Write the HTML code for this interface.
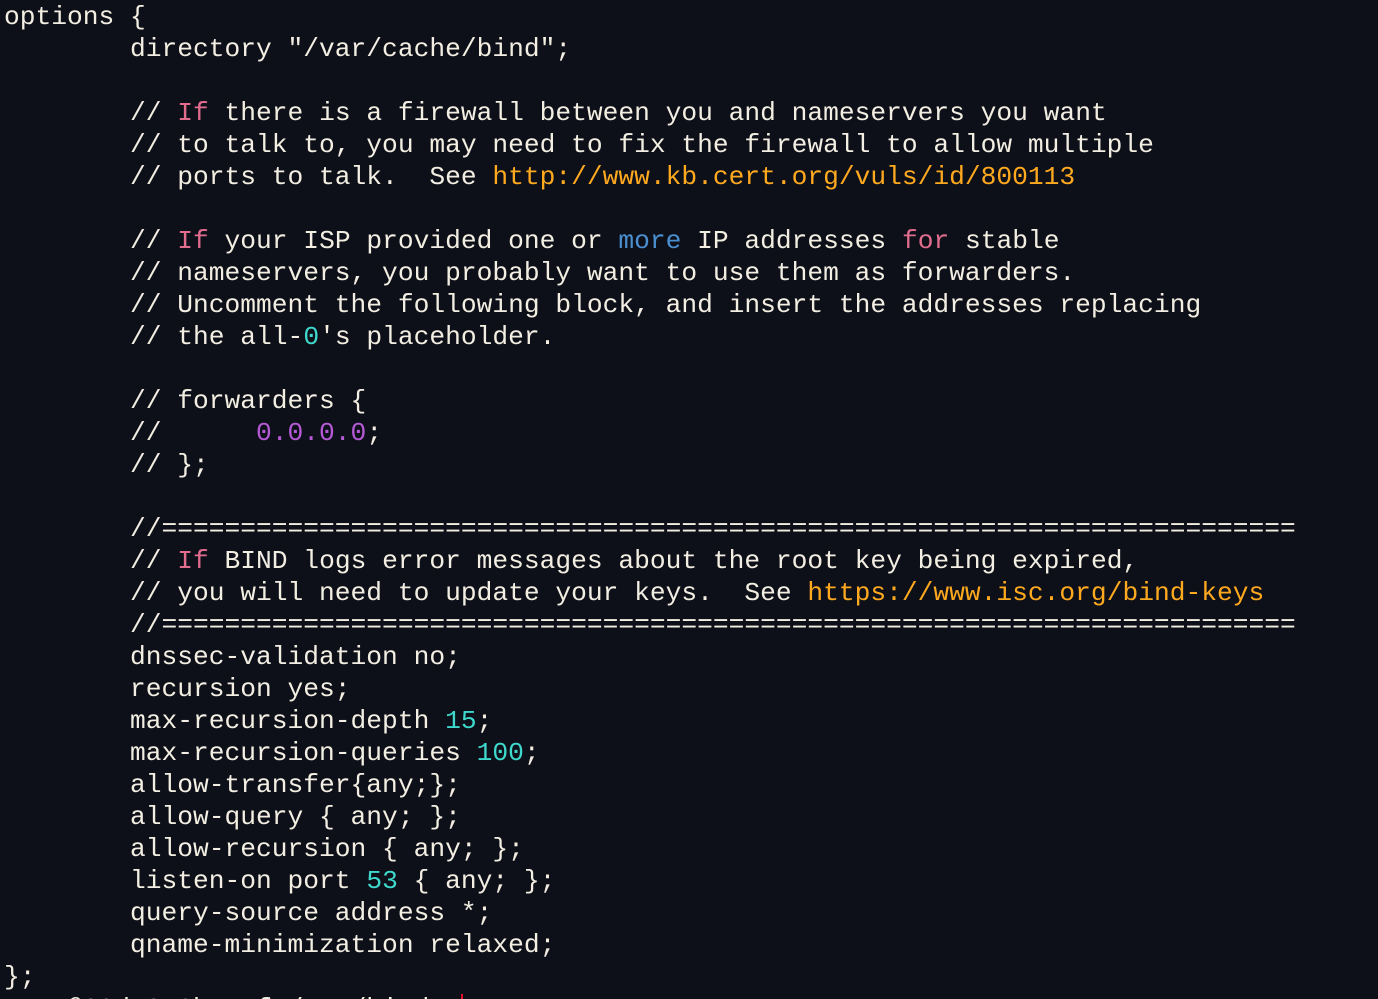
<!DOCTYPE html>
<html><head><style>
html,body{margin:0;padding:0;background:#0e1019;width:1378px;height:999px;overflow:hidden;position:relative}
pre{margin:0;position:absolute;left:4px;top:1px;font-family:"Liberation Mono",monospace;font-size:26.25px;line-height:32px;color:#f2eee2;white-space:pre}
.k{color:#e06c8e}.u{color:#ffa91f}.b{color:#4a8fd0}.n{color:#3ed8cc}.p{color:#b659d6}
.c{display:inline-block;width:2px;height:26px;background:#e0102a;vertical-align:-4px}
</style></head><body>
<pre>options {
        directory "/var/cache/bind";

        // <span class="k">If</span> there is a firewall between you and nameservers you want
        // to talk to, you may need to fix the firewall to allow multiple
        // ports to talk.  See <span class="u">http://www.kb.cert.org/vuls/id/800113</span>

        // <span class="k">If</span> your ISP provided one or <span class="b">more</span> IP addresses <span class="k">for</span> stable
        // nameservers, you probably want to use them as forwarders.
        // Uncomment the following block, and insert the addresses replacing
        // the all-<span class="n">0</span>'s placeholder.

        // forwarders {
        //      <span class="p">0.0.0.0</span>;
        // };

        //========================================================================
        // <span class="k">If</span> BIND logs error messages about the root key being expired,
        // you will need to update your keys.  See <span class="u">https://www.isc.org/bind-keys</span>
        //========================================================================
        dnssec-validation no;
        recursion yes;
        max-recursion-depth <span class="n">15</span>;
        max-recursion-queries <span class="n">100</span>;
        allow-transfer{any;};
        allow-query { any; };
        allow-recursion { any; };
        listen-on port <span class="n">53</span> { any; };
        query-source address *;
        qname-minimization relaxed;
};
root@00d7346b774f:/etc/bind# <span class="c"></span></pre>
</body></html>
